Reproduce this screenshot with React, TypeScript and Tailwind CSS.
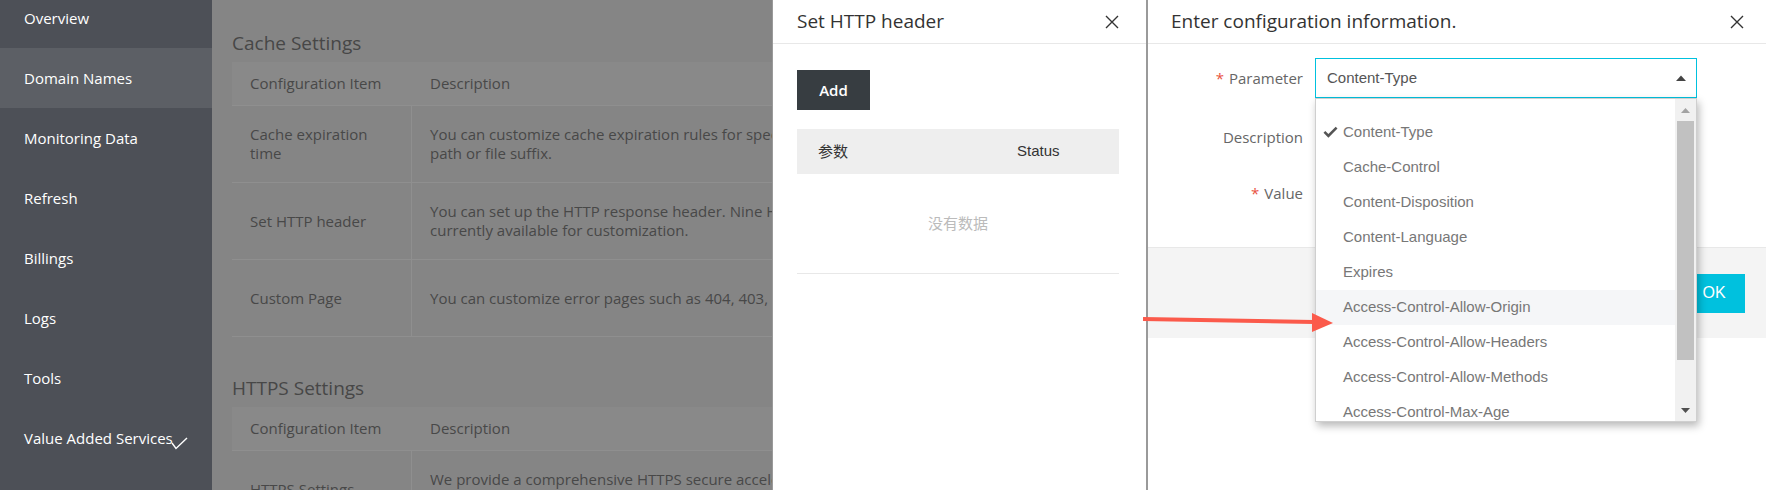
import React from "react"

const menu = [
  "Overview",
  "Domain Names",
  "Monitoring Data",
  "Refresh",
  "Billings",
  "Logs",
  "Tools",
  "Value Added Services",
]

const cacheRows = [
  {
    item: ["Cache expiration", "time"],
    desc: [
      "You can customize cache expiration rules for specific directories based on the",
      "path or file suffix.",
    ],
  },
  {
    item: ["Set HTTP header"],
    desc: [
      "You can set up the HTTP response header. Nine HTTP headers are",
      "currently available for customization.",
    ],
  },
  {
    item: ["Custom Page"],
    desc: ["You can customize error pages such as 404, 403, 503 and 504."],
  },
]

const headers = [
  "Content-Type",
  "Cache-Control",
  "Content-Disposition",
  "Content-Language",
  "Expires",
  "Access-Control-Allow-Origin",
  "Access-Control-Allow-Headers",
  "Access-Control-Allow-Methods",
  "Access-Control-Max-Age",
]

const CloseIcon = () => (
  <svg width="14" height="14" viewBox="0 0 14 14" fill="none">
    <path d="M1 1L13 13M13 1L1 13" stroke="#333" strokeWidth="1.4" />
  </svg>
)

const SettingsTable = ({
  rows,
}: {
  rows: { item: string[]; desc: string[] }[]
}) => (
  <div className="mt-[6px] w-[1000px] text-[15px] leading-[19px] text-[#484848]">
    <div className="grid h-[44px] grid-cols-[180px_1fr] items-center border-b border-[#8f8f8f] bg-[#898989]">
      <div className="pl-[18px]">Configuration Item</div>
      <div className="pl-[18px]">Description</div>
    </div>
    {rows.map((row) => (
      <div
        key={row.item.join(" ")}
        className="grid h-[77px] grid-cols-[180px_1fr] border-b border-[#8f8f8f]"
      >
        <div className="flex flex-col justify-center border-r border-[#8f8f8f] pl-[18px]">
          {row.item.map((t) => (
            <span key={t} className="whitespace-nowrap">
              {t}
            </span>
          ))}
        </div>
        <div className="flex flex-col justify-center pl-[18px]">
          {row.desc.map((t) => (
            <span key={t} className="whitespace-nowrap">
              {t}
            </span>
          ))}
        </div>
      </div>
    ))}
  </div>
)

export default function App() {
  return (
    <div className="relative flex h-[490px] w-[1766px] overflow-hidden bg-white font-['Open_Sans',sans-serif]">
      {/* sidebar */}
      <aside className="w-[212px] shrink-0 bg-[#4d5057] text-[15px] text-white">
        <div className="-mt-[12px]">
          {menu.map((m) => (
            <div
              key={m}
              className={`relative flex h-[60px] items-center pl-[24px] ${
                m === "Domain Names" ? "bg-[#5c5f65]" : ""
              }`}
            >
              <span className="whitespace-nowrap">{m}</span>
              {m === "Value Added Services" && (
                <svg
                  className="absolute left-[170px] top-[29px]"
                  width="18"
                  height="13"
                  viewBox="0 0 18 13"
                  fill="none"
                >
                  <path d="M2 6L6 11.5L17 1" stroke="#fff" strokeWidth="1.4" />
                </svg>
              )}
            </div>
          ))}
        </div>
      </aside>

      {/* page content under the mask */}
      <main className="w-[560px] shrink-0 overflow-hidden bg-[#858585] pl-[20px]">
        <h2 className="mt-[30px] h-[26px] whitespace-nowrap text-[19px] leading-[26px] text-[#474747]">
          Cache Settings
        </h2>
        <SettingsTable rows={cacheRows} />
        <h2 className="mt-[38px] h-[26px] whitespace-nowrap text-[19px] leading-[26px] text-[#474747]">
          HTTPS Settings
        </h2>
        <SettingsTable
          rows={[
            {
              item: ["HTTPS Settings"],
              desc: [
                "We provide a comprehensive HTTPS secure acceleration solution.",
                "You can upload certificates and enable HTTPS.",
              ],
            },
          ]}
        />
      </main>

      {/* drawer: Set HTTP header */}
      <section className="w-[374px] shrink-0 border-l border-[#9a9a9a] bg-white">
        <div className="flex h-[44px] items-center justify-between border-b border-[#e8e8e8] pl-[24px] pr-[27px]">
          <span className="text-[19px] text-[#333]">Set HTTP header</span>
          <CloseIcon />
        </div>
        <div className="pl-[24px] pr-[27px] pt-[26px]">
          <button className="h-[40px] w-[73px] bg-[#373d41] text-[15px] font-semibold text-white">
            Add
          </button>
          <div className="mt-[19px] border-b border-[#e8e8e8]">
            <div className="grid h-[45px] grid-cols-[200px_1fr] items-center bg-[#eeeeee] text-[15px] text-[#333]">
              <span className="pl-[21px] font-['Noto_Sans_CJK_SC',sans-serif]">参数</span>
              <span className="pl-[20px] font-['Liberation_Sans',sans-serif]">Status</span>
            </div>
            <div className="flex h-[99px] items-center justify-center font-['Noto_Sans_CJK_SC',sans-serif] text-[15px] text-[#bbbbbb]">
              没有数据
            </div>
          </div>
        </div>
      </section>

      {/* drawer: Enter configuration information */}
      <section className="relative w-[620px] shrink-0 border-l-2 border-[#9a9a9a] bg-white">
        <div className="flex h-[44px] items-center justify-between border-b border-[#e8e8e8] pl-[23px] pr-[22px]">
          <span className="text-[19px] text-[#333]">Enter configuration information.</span>
          <CloseIcon />
        </div>

        <div className="pt-[14px] text-[15px] text-[#666]">
          <div className="flex h-[40px] items-center">
            <label className="flex w-[155px] justify-end">
              <span className="mr-[5px] text-[#e9523f]">*</span>Parameter
            </label>
            <div className="relative ml-[12px] w-[382px]">
              <div className="flex h-[40px] items-center justify-between border border-[#00c1de] pl-[11px] pr-[10px] font-['Liberation_Sans',sans-serif] text-[#555]">
                <span>Content-Type</span>
                <svg width="10" height="6" viewBox="0 0 10 6">
                  <path d="M0 6L5 0.5L10 6Z" fill="#444" />
                </svg>
              </div>

              {/* open select menu */}
              <div className="absolute left-0 top-full z-10 flex h-[324px] w-[382px] overflow-hidden border border-[#cfcfcf] bg-white shadow-[2px_4px_8px_rgba(0,0,0,0.28)]">
                <ul className="flex-1 pt-[16px] font-['Liberation_Sans',sans-serif] text-[15px] text-[#777]">
                  {headers.map((h, i) => (
                    <li
                      key={h}
                      className={`relative flex h-[35px] items-center whitespace-nowrap pl-[27px] ${
                        i === 5 ? "bg-[#f5f6f8]" : ""
                      }`}
                    >
                      {i === 0 && (
                        <svg
                          className="absolute left-[7px] top-[11px]"
                          width="15"
                          height="13"
                          viewBox="0 0 15 13"
                        >
                          <path d="M0.5 6.8L2.3 5L5.4 8.1L12.7 0.8L14.5 2.6L5.4 11.7Z" fill="#555" />
                        </svg>
                      )}
                      {h}
                    </li>
                  ))}
                </ul>
                <div className="flex w-[21px] flex-col bg-[#f1f1f1]">
                  <div className="flex h-[22px] items-center justify-center">
                    <svg width="9" height="5" viewBox="0 0 9 5">
                      <path d="M0 5L4.5 0L9 5Z" fill="#a3a3a3" />
                    </svg>
                  </div>
                  <div className="ml-[2px] h-[239px] w-[17px] bg-[#c1c1c1]" />
                  <div className="flex-1" />
                  <div className="flex h-[22px] items-center justify-center">
                    <svg width="9" height="5" viewBox="0 0 9 5">
                      <path d="M0 0L4.5 5L9 0Z" fill="#505050" />
                    </svg>
                  </div>
                </div>
              </div>
            </div>
          </div>

          <div className="mt-[19px] flex h-[40px] items-center">
            <label className="flex w-[155px] justify-end">Description</label>
            <div className="ml-[12px] h-[40px] w-[382px] border border-[#dddddd]" />
          </div>

          <div className="mt-[16px] flex h-[40px] items-center">
            <label className="flex w-[155px] justify-end">
              <span className="mr-[5px] text-[#e9523f]">*</span>Value
            </label>
            <div className="ml-[12px] h-[40px] w-[382px] border border-[#dddddd]" />
          </div>
        </div>

        <div className="mt-[34px] flex h-[91px] items-center justify-end gap-[10px] border-t border-[#e8e8e8] bg-[#f4f4f4] pr-[21px] font-['Liberation_Sans',sans-serif] text-[16px]">
          <button className="h-[39px] w-[80px] border border-[#dddddd] bg-white text-[#333]">
            Cancel
          </button>
          <button className="h-[39px] w-[62px] bg-[#00c1de] text-white">OK</button>
        </div>
      </section>

      {/* annotation arrow */}
      <svg
        className="absolute left-[1140px] top-[310px] z-20"
        width="200"
        height="26"
        viewBox="0 0 200 26"
      >
        <path d="M3 9L174 12" stroke="#fb5a4b" strokeWidth="4" />
        <path d="M172 3L193 13L172 22Z" fill="#fb5a4b" />
      </svg>
    </div>
  )
}
